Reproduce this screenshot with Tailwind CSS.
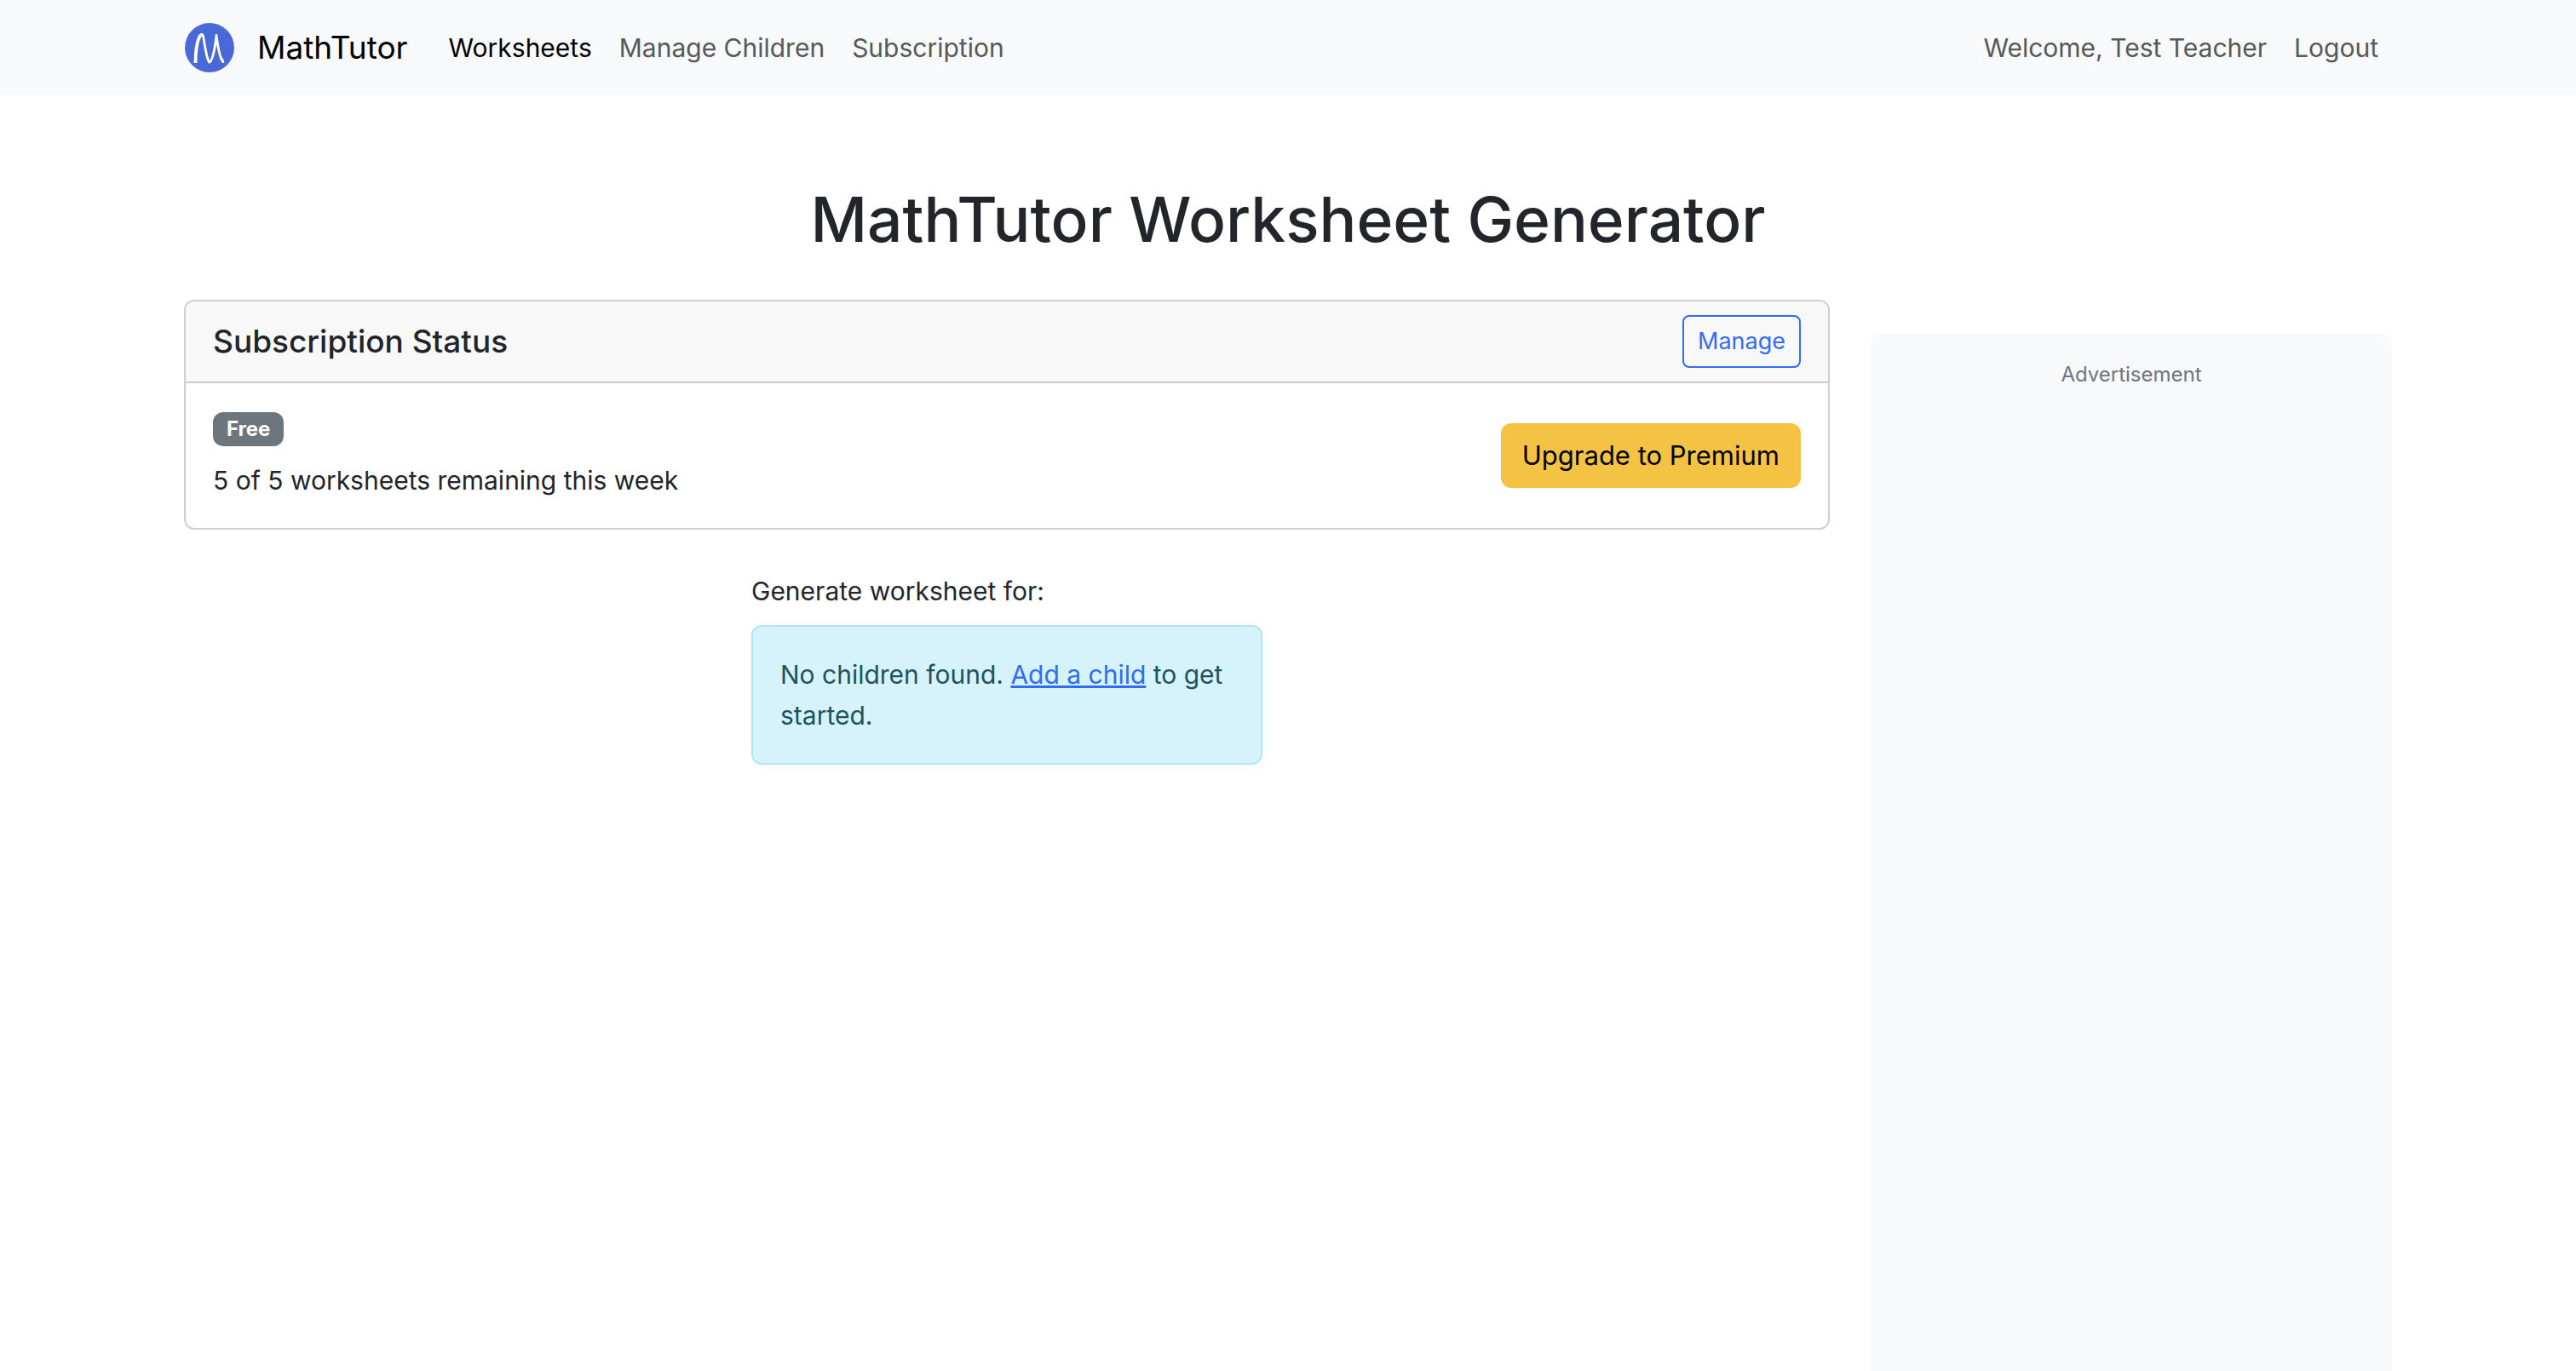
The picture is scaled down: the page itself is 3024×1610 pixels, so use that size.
<!DOCTYPE html>
<html lang="en">
<head>
<meta charset="utf-8">
<meta name="viewport" content="width=device-width, initial-scale=1">
<title>MathTutor Worksheet Generator</title>
<script src="https://cdn.jsdelivr.net/npm/@tailwindcss/browser@4"></script>
</head>
<body class="flex min-h-screen flex-col bg-white font-['Inter',sans-serif] text-[30px] leading-[48px] text-[#222529]">

<header class="bg-[#f8f9fb]">
  <nav class="mx-auto flex w-full max-w-[2640px] items-center px-6 py-4">
    <a href="#" class="mr-8 flex items-center gap-[26px] text-[37px] text-black">
      <svg class="size-[60px]" viewBox="0 0 60 60" aria-hidden="true">
        <circle cx="30" cy="30" r="29" fill="#4a69d9"/>
        <g fill="none" stroke="#fff" stroke-linejoin="round">
          <path d="M13.500 48C13.500 37 15 24 18 17.500Q19.500 14.500 21.500 15" stroke-width="3.800"/>
          <path d="M19 16Q21.500 13 22.500 16.500C24.500 26 26 42 29.500 47C33 47 36.500 31 38 15.500C39.500 27 42 43.500 46 46.500" stroke-width="2.800"/>
          <path d="M44 42Q45 47 47 46.500" stroke-width="2.800"/>
        </g>
      </svg>
      MathTutor
    </a>
    <ul class="flex grow items-center text-[#575858]">
      <li><a href="#" aria-current="page" class="block p-4 text-black">Worksheets</a></li>
      <li><a href="#" class="block p-4">Manage Children</a></li>
      <li><a href="#" class="block p-4">Subscription</a></li>
      <li class="ml-auto p-4">Welcome, Test Teacher</li>
      <li><a href="#" class="block p-4">Logout</a></li>
    </ul>
  </nav>
</header>

<div class="mx-auto flex w-full max-w-[2640px] grow flex-col px-6 pt-[98px]">
  <h1 class="mb-[46px] text-center text-[73px] leading-[96px] font-medium">MathTutor Worksheet Generator</h1>

  <div class="grid grow grid-cols-4 gap-12">
    <main class="col-span-3">
      <section class="rounded-xl border-2 border-[#cfcfcf]">
        <div class="flex items-center justify-between rounded-t-[10px] border-b-2 border-[#cbcbcb] bg-[#f8f8f8] px-8 py-4">
          <h2 class="text-[37px] font-medium">Subscription Status</h2>
          <button type="button" class="rounded-lg border-2 border-[#316cf4] px-4 py-2 text-[27px] leading-[42px] text-[#316cf4]">Manage</button>
        </div>
        <div class="flex items-center justify-between p-8">
          <div class="flex flex-col items-start gap-4 pt-0.5">
            <span class="rounded-xl bg-[#6d757d] px-4 py-2 text-[24px] leading-6 font-bold text-white">Free</span>
            <p>5 of 5 worksheets remaining this week</p>
          </div>
          <button type="button" class="rounded-xl bg-[#f5c344] px-[25px] py-[14px] text-[31px] text-black">Upgrade to Premium</button>
        </div>
      </section>

      <section class="mx-auto mt-12 max-w-[600px]" aria-labelledby="worksheet-for">
        <h3 id="worksheet-for" class="mb-4">Generate worksheet for:</h3>
        <div role="alert" class="rounded-xl border-2 border-[#ace8f8] bg-[#d6f2fa] p-8 text-[#225160]">No children found. <a href="#" class="text-[#316cf4] underline">Add a child</a> to get started.</div>
      </section>
    </main>

    <aside class="mt-10 rounded-t-xl bg-[#f8f9fb] p-8 text-center text-[24px] leading-8 text-[#6d757d]">Advertisement</aside>
  </div>
</div>
</body>
</html>
